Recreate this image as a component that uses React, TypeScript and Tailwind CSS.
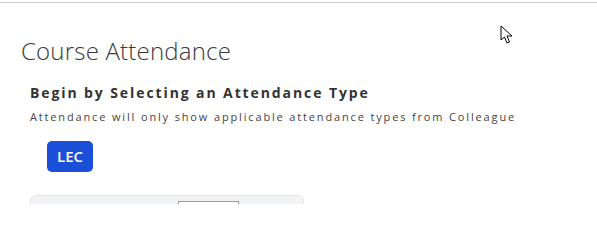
export default function App() {
  return (
    <div className="relative h-[204px] overflow-hidden bg-white font-['Open_Sans',sans-serif]">
      <div className="mt-[2px] border-t border-[#d0d0d0]"></div>
      <div className="pl-[21px] pt-[32px]">
        <h1 className="text-[24px] font-light leading-[32px] tracking-[0.2px] text-[#3a3a3a]">Course Attendance</h1>
        <div className="pl-[9px] pt-[16px]">
          <h2 className="text-[14px] font-bold leading-[20px] tracking-[1.9px] text-[#333]">
            Begin by Selecting an Attendance Type
          </h2>
          <p className="mt-[6px] text-[11px] leading-[16px] tracking-[1.85px] text-[#444]">
            Attendance will only show applicable attendance types from Colleague
          </p>
          <div className="pl-[17px] pt-[16px]">
            <button className="h-[31px] w-[46px] rounded-[5px] bg-[#1b4fd8] text-[15px] font-semibold text-white">
              LEC
            </button>
          </div>
          <div className="mt-[23px] h-[20px] w-[274px] rounded-t-[6px] border border-[#e3e4e6] bg-[#f2f3f5] pl-[147px] pt-[5px]">
            <div className="h-[20px] w-[61px] border border-[#9a9a9a] bg-white"></div>
          </div>
        </div>
      </div>
      <svg className="absolute left-[500px] top-[25px]" width="16" height="20" viewBox="0 0 16 20">
        <path d="M1 1 L1 15 L4.5 12 L7 18 L9.5 17 L7 11 L12 11 Z" fill="white" stroke="black" strokeWidth="1" strokeLinejoin="round" />
      </svg>
    </div>
  );
}
